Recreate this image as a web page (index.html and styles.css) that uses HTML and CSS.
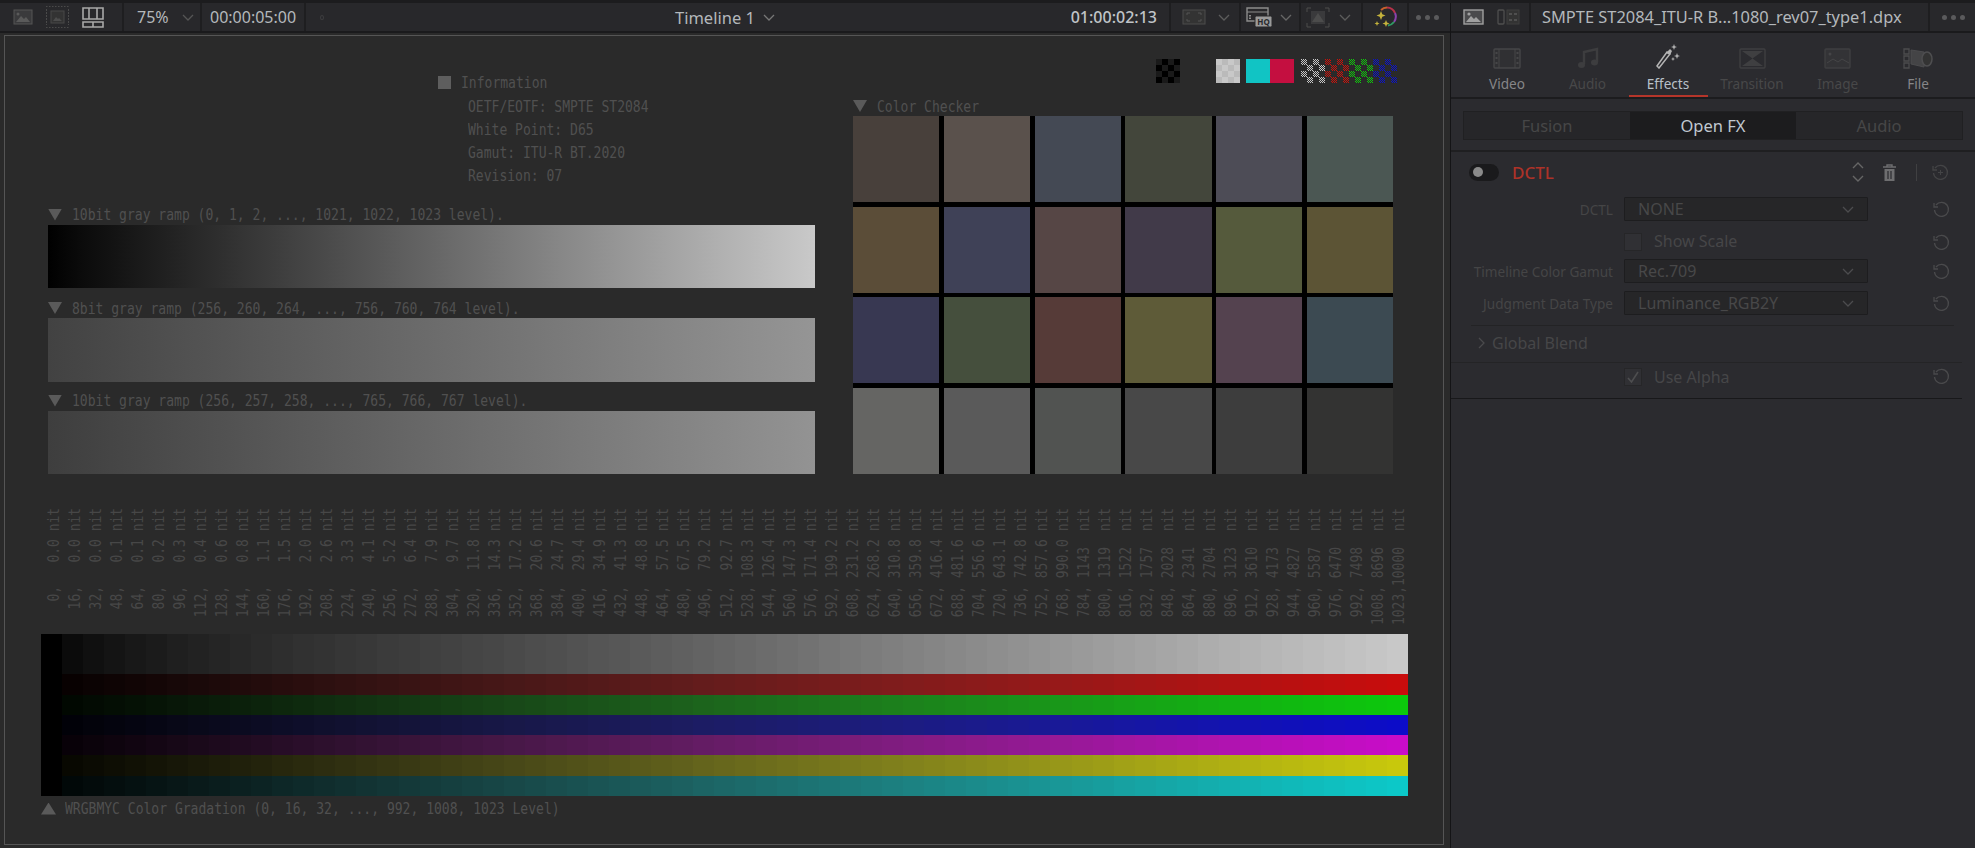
FILE: index.html
```html
<!DOCTYPE html>
<html lang="en">
<head>
  <meta charset="UTF-8" />
  <title>Timeline 1</title>
  <link rel="stylesheet" href="styles.css">
</head>
<body>
  <div class="topstrip"></div>
  <div class="layout">
    <div class="left">
      <div class="toolbar">
        <div class="tb-sec sec-views">
          <svg class="ic" width="20" height="16" viewBox="0 0 20 16"><rect x="1" y="1" width="18" height="14" fill="#3a3a3c" stroke="#555"/><path d="M3 13l5-6 3 3 2-2 4 5z" fill="#5a5a5a"/><circle cx="5" cy="5" r="1.5" fill="#5a5a5a"/></svg>
          <svg class="ic" width="25" height="24" viewBox="0 0 25 24"><path d="M1 1.5h23M1 22.5h23" stroke="#4a4a4a" stroke-dasharray="1.5 1.5"/><path d="M1.5 4v16M23.5 4v16" stroke="#4a4a4a" stroke-dasharray="2 1"/><rect x="6" y="6" width="13" height="12" fill="#333" stroke="#484848"/><path d="M8 16l3-4 2 2 1-1 3 3z" fill="#4c4c4c"/></svg>
          <svg class="ic" width="22" height="21" viewBox="0 0 22 21"><path d="M1 1h20v11H1zM7 1v11M15 1v11M1 15h20v5H1zM11 15v5" fill="none" stroke="#a8a8a8" stroke-width="1.6"/></svg>
        </div>
        <div class="tb-sec sec-zoom"><span class="tb-text">75%</span><svg class="chev" width="12" height="7" viewBox="0 0 12 7"><path d="M1 1l5 5 5-5" fill="none" stroke="#555" stroke-width="1.3"/></svg></div>
        <div class="tb-sec sec-dur"><span class="tb-text">00:00:05:00</span></div>
        <div class="tb-fill">
          <span class="tb-dot"></span>
          <span class="tb-title">Timeline 1</span>
          <svg class="chev" width="12" height="7" viewBox="0 0 12 7"><path d="M1 1l5 5 5-5" fill="none" stroke="#777" stroke-width="1.3"/></svg>
          <span class="tb-tc">01:00:02:13</span>
        </div>
        <div class="tb-sec sec-a">
          <svg width="24" height="16" viewBox="0 0 24 16"><rect x="1" y="1" width="22" height="14" fill="#333" stroke="#4c4c4c"/><path d="M5 6V4h3M16 4h3v2M19 10v2h-3M8 12H5v-2" fill="none" stroke="#555"/></svg>
          <svg class="chev" width="12" height="7" viewBox="0 0 12 7"><path d="M1 1l5 5 5-5" fill="none" stroke="#5c5c5c" stroke-width="1.3"/></svg>
        </div>
        <div class="tb-sec sec-b">
          <svg width="26" height="20" viewBox="0 0 26 20"><path d="M1 1h21v13H1z" fill="none" stroke="#8c8c8c" stroke-width="1.4"/><path d="M1 5h21" stroke="#8c8c8c"/><path d="M4 8v4" stroke="#8c8c8c" stroke-width="2" stroke-dasharray="1.5 1"/><rect x="9" y="9" width="17" height="11" rx="1.5" fill="#9a9a9a" stroke="#28282b"/><text x="17.5" y="18" class="hq">HQ</text></svg>
          <svg class="chev" width="12" height="7" viewBox="0 0 12 7"><path d="M1 1l5 5 5-5" fill="none" stroke="#666" stroke-width="1.3"/></svg>
        </div>
        <div class="tb-sec sec-c">
          <svg width="24" height="21" viewBox="0 0 24 21"><path d="M1 5V1h4M19 1h4v4M23 16v4h-4M5 20H1v-4" fill="none" stroke="#4c4c4c"/><rect x="5" y="4" width="14" height="13" fill="#3a3a3c"/><path d="M6 15l6-9 6 9z" fill="#4c4c4c"/></svg>
          <svg class="chev" width="12" height="7" viewBox="0 0 12 7"><path d="M1 1l5 5 5-5" fill="none" stroke="#5c5c5c" stroke-width="1.3"/></svg>
        </div>
        <div class="tb-sec sec-d">
          <svg width="24" height="22" viewBox="0 0 24 22">
            <path d="M7 4A9 9 0 0 1 13 1.500" fill="none" stroke="#c8602c" stroke-width="2"/>
            <path d="M13 1.500A9 9 0 0 1 21 7" fill="none" stroke="#b8324a" stroke-width="2"/>
            <path d="M21 7A9 9 0 0 1 20 16" fill="none" stroke="#8a42ac" stroke-width="2"/>
            <path d="M20 16A9 9 0 0 1 14 19.500" fill="none" stroke="#2f9a64" stroke-width="2"/>
            <path d="M7 5l1.300 3.200 3.200 1.300-3.200 1.300L7 14l-1.300-3.200-3.200-1.300 3.200-1.300zM12 14l1 2.500 2.500 1-2.500 1-1 2.500-1-2.500-2.500-1 2.500-1zM3 15l.7 1.800 1.800.7-1.800.7L3 20l-.7-1.800-1.800-.7 1.800-.7z" fill="#c4b23c"/>
          </svg>
        </div>
        <div class="tb-sec sec-e"><span class="dots"><i></i><i></i><i></i></span></div>
      </div>
      <div class="stage">
        <div class="viewer">
          <div class="upper">
            <div class="col-ramps">
              <div class="info">
                <div class="line head"><span class="square"></span><span class="mono">Information</span></div>
                <div class="line sub"><span class="mono">OETF/EOTF: SMPTE ST2084</span></div>
                <div class="line sub"><span class="mono">White Point: D65</span></div>
                <div class="line sub"><span class="mono">Gamut: ITU-R BT.2020</span></div>
                <div class="line sub"><span class="mono">Revision: 07</span></div>
              </div>
              <div class="caption first"><span class="tri"></span><span class="mono">10bit gray ramp (0, 1, 2, ..., 1021, 1022, 1023 level).</span></div>
              <div class="ramp ramp-a"></div>
              <div class="caption second"><span class="tri"></span><span class="mono">8bit gray ramp (256, 260, 264, ..., 756, 760, 764 level).</span></div>
              <div class="ramp ramp-b"></div>
              <div class="caption"><span class="tri"></span><span class="mono">10bit gray ramp (256, 257, 258, ..., 765, 766, 767 level).</span></div>
              <div class="ramp ramp-c"></div>
            </div>
            <div class="col-checker">
              <div class="patches">
                <div class="patch chk-dark"></div>
                <div class="patch chk-light"></div>
                <div class="patch cyan"></div>
                <div class="patch crimson"></div>
                <div class="patch fine f-white"></div>
                <div class="patch fine f-red"></div>
                <div class="patch fine f-green"></div>
                <div class="patch fine f-blue"></div>
              </div>
              <div class="caption checker-cap"><span class="tri"></span><span class="mono">Color Checker</span></div>
              <div class="checker">
                <div style="background:#48403b"></div><div style="background:#5a514c"></div><div style="background:#444954"></div><div style="background:#43463b"></div><div style="background:#4d4c56"></div><div style="background:#4b5753"></div>
                <div style="background:#5b4d38"></div><div style="background:#3f4157"></div><div style="background:#564645"></div><div style="background:#413a49"></div><div style="background:#555a3c"></div><div style="background:#5c5435"></div>
                <div style="background:#383852"></div><div style="background:#454f3d"></div><div style="background:#563b38"></div><div style="background:#5e5b38"></div><div style="background:#54424f"></div><div style="background:#3c4a52"></div>
                <div style="background:#656563"></div><div style="background:#5a5a5a"></div><div style="background:#515351"></div><div style="background:#484848"></div><div style="background:#3d3d3d"></div><div style="background:#333332"></div>
              </div>
            </div>
          </div>
          <div class="nits" id="nits"></div>
          <div class="bars" id="bars"></div>
          <div class="caption bottom-cap"><span class="tri up"></span><span class="mono">WRGBMYC Color Gradation (0, 16, 32, ..., 992, 1008, 1023 Level)</span></div>
        </div>
      </div>
    </div>

    <div class="inspector">
      <div class="in-head">
        <div class="in-views">
          <svg width="21" height="16" viewBox="0 0 21 16"><rect x="1" y="1" width="19" height="14" fill="#4a4a4c" stroke="#a0a0a0" stroke-width="1.4"/><path d="M3 13l5-6 3 3 2-2 5 5z" fill="#a0a0a0"/><circle cx="6" cy="5" r="1.6" fill="#a0a0a0"/></svg>
          <svg width="23" height="16" viewBox="0 0 23 16"><rect x="1" y="1" width="6" height="14" rx="1" fill="none" stroke="#4f4f4f" stroke-width="1.3"/><rect x="10" y="1" width="12" height="14" fill="#333" stroke="#3f3f3f"/><path d="M12 5h3M17 5h3M12 11h3M17 11h3" stroke="#4f4f4f" stroke-width="2"/></svg>
        </div>
        <div class="in-title">SMPTE ST2084_ITU-R B...1080_rev07_type1.dpx</div>
        <div class="in-more"><span class="dots"><i></i><i></i><i></i></span></div>
      </div>

      <div class="tabs">
        <div class="tab on-soft">
          <svg width="28" height="21" viewBox="0 0 28 21"><rect x="1" y="1" width="26" height="19" rx="1" fill="#303033" stroke="#464648" stroke-width="1.400"/><path d="M6 1v19M22 1v19" stroke="#464648"/><path d="M3.500 4v14M24.500 4v14" stroke="#464648" stroke-width="2" stroke-dasharray="2 3"/></svg>
          <span>Video</span>
        </div>
        <div class="tab off">
          <svg width="22" height="22" viewBox="0 0 22 22"><path d="M7 17V5l13-3v13" fill="none" stroke="#3d3d3f" stroke-width="2.400"/><ellipse cx="4.500" cy="18" rx="3.500" ry="3" fill="#3d3d3f"/><ellipse cx="17.500" cy="15.500" rx="3.500" ry="3" fill="#3d3d3f"/></svg>
          <span>Audio</span>
        </div>
        <div class="tab active">
          <svg width="26" height="25" viewBox="0 0 26 25"><path d="M2 22l2 2 11-14-3-2z" fill="none" stroke="#b4b4b4" stroke-width="1.500"/><path d="M11 9l4-4 2 2-2 4z" fill="#b4b4b4"/><path d="M19 0l.8 2.200L22 3l-2.200.8L19 6l-.8-2.200L16 3l2.200-.8zM22 9l.8 2.200L25 12l-2.200.8L22 15l-.8-2.200L19 12l2.200-.8zM18 13l.6 1.400 1.400.6-1.400.6-.6 1.400-.6-1.400-1.400-.6 1.400-.6z" fill="#b4b4b4"/></svg>
          <span>Effects</span>
        </div>
        <div class="tab off">
          <svg width="27" height="21" viewBox="0 0 27 21"><rect x="1" y="1" width="25" height="19" rx="1" fill="none" stroke="#3f3f41" stroke-width="1.400"/><path d="M3 3h21l-10.500 7.500zM3 18h21l-10.500-7.500z" fill="#3f3f41"/></svg>
          <span>Transition</span>
        </div>
        <div class="tab off">
          <svg width="27" height="21" viewBox="0 0 27 21"><rect x="1" y="1" width="25" height="19" rx="1" fill="#333336" stroke="#3f3f41" stroke-width="1.400"/><path d="M3 15l6-4 5 3 4-3 7 4" fill="none" stroke="#454547"/><circle cx="6" cy="6" r="1.500" fill="#454547"/></svg>
          <span>Image</span>
        </div>
        <div class="tab on-soft">
          <svg width="30" height="21" viewBox="0 0 30 21"><path d="M1 1h5v5H1zM1 8h5v5H1zM1 15h5v5H1z" fill="none" stroke="#4c4c4e" stroke-width="1.300"/><path d="M8 2l13 2v15l-13-3z" fill="#444446" stroke="#4c4c4e"/><ellipse cx="24" cy="11" rx="5" ry="7" fill="#333" stroke="#4e4e50" stroke-width="1.500"/></svg>
          <span>File</span>
        </div>
      </div>

      <div class="subtabs-wrap">
        <div class="subtabs">
          <div class="subtab">Fusion</div>
          <div class="subtab sel">Open FX</div>
          <div class="subtab">Audio</div>
        </div>
      </div>

      <div class="fx-head">
        <span class="switch"><i></i></span>
        <span class="fx-name">DCTL</span>
        <svg class="fx-updown" width="12" height="20" viewBox="0 0 12 20"><path d="M1 6l5-5 5 5M1 14l5 5 5-5" fill="none" stroke="#666" stroke-width="1.400"/></svg>
        <svg class="fx-trash" width="13" height="17" viewBox="0 0 13 17"><path d="M0 3h13M4 3V1h5v2" fill="none" stroke="#6e6e70" stroke-width="1.400"/><path d="M1.500 5h10v12h-10z" fill="#6e6e70"/><path d="M5 7v8M8 7v8" stroke="#2b2b2f" stroke-width="1.200"/></svg>
        <span class="fx-sep"></span>
        <svg class="reset" width="17" height="17" viewBox="0 0 17 17"><path d="M3 4a7 7 0 1 1-1.500 5" fill="none" stroke="#444446" stroke-width="1.300"/><path d="M1 2v4h4" fill="none" stroke="#444446" stroke-width="1.300"/><path d="M8.500 6v5M6 8.500h5" stroke="#444446"/></svg>
      </div>

      <div class="row row-dctl">
        <label class="row-label">DCTL</label>
        <div class="select"><span>NONE</span><svg width="12" height="7" viewBox="0 0 12 7"><path d="M1 1l5 5 5-5" fill="none" stroke="#4c4c4e" stroke-width="1.300"/></svg></div>
        <svg class="reset" width="17" height="17" viewBox="0 0 17 17"><path d="M3 4a7 7 0 1 1-1.500 5" fill="none" stroke="#4a4a4c" stroke-width="1.300"/><path d="M1 2v4h4" fill="none" stroke="#4a4a4c" stroke-width="1.300"/></svg>
      </div>
      <div class="row row-check">
        <span></span>
        <div class="check-line"><span class="check"></span><span class="check-text">Show Scale</span></div>
        <svg class="reset" width="17" height="17" viewBox="0 0 17 17"><path d="M3 4a7 7 0 1 1-1.500 5" fill="none" stroke="#4a4a4c" stroke-width="1.300"/><path d="M1 2v4h4" fill="none" stroke="#4a4a4c" stroke-width="1.300"/></svg>
      </div>
      <div class="row row-gamut">
        <label class="row-label">Timeline Color Gamut</label>
        <div class="select"><span>Rec.709</span><svg width="12" height="7" viewBox="0 0 12 7"><path d="M1 1l5 5 5-5" fill="none" stroke="#4c4c4e" stroke-width="1.300"/></svg></div>
        <svg class="reset" width="17" height="17" viewBox="0 0 17 17"><path d="M3 4a7 7 0 1 1-1.500 5" fill="none" stroke="#4a4a4c" stroke-width="1.300"/><path d="M1 2v4h4" fill="none" stroke="#4a4a4c" stroke-width="1.300"/></svg>
      </div>
      <div class="row row-judge">
        <label class="row-label">Judgment Data Type</label>
        <div class="select"><span>Luminance_RGB2Y</span><svg width="12" height="7" viewBox="0 0 12 7"><path d="M1 1l5 5 5-5" fill="none" stroke="#4c4c4e" stroke-width="1.300"/></svg></div>
        <svg class="reset" width="17" height="17" viewBox="0 0 17 17"><path d="M3 4a7 7 0 1 1-1.500 5" fill="none" stroke="#4a4a4c" stroke-width="1.300"/><path d="M1 2v4h4" fill="none" stroke="#4a4a4c" stroke-width="1.300"/></svg>
      </div>

      <div class="blend">
        <svg width="8" height="12" viewBox="0 0 8 12"><path d="M1 1l5 5-5 5" fill="none" stroke="#4a4a4c" stroke-width="1.300"/></svg>
        <span>Global Blend</span>
      </div>

      <div class="row row-alpha">
        <span></span>
        <div class="check-line"><span class="check"><svg width="18" height="18" viewBox="0 0 18 18"><path d="M4 10l3.500 4L14 4" fill="none" stroke="#4e4e50" stroke-width="1.600"/></svg></span><span class="check-text">Use Alpha</span></div>
        <svg class="reset" width="17" height="17" viewBox="0 0 17 17"><path d="M3 4a7 7 0 1 1-1.500 5" fill="none" stroke="#4a4a4c" stroke-width="1.300"/><path d="M1 2v4h4" fill="none" stroke="#4a4a4c" stroke-width="1.300"/></svg>
      </div>
    </div>
  </div>
  <script src="script.js"></script>
</body>
</html>
```

FILE: styles.css
```css
* {
  box-sizing: border-box;
}
html, body {
  margin: 0;
  height: 848px;
  overflow: hidden;
}
body {
  background: #1a1a1c;
  font-family: "Noto Sans", sans-serif;
  color: #888;
}
.topstrip {
  height: 3px;
  background: #1c1c1e;
}
.layout {
  display: flex;
  height: 845px;
}
.left {
  width: 1450px;
  flex: none;
}

/* toolbar */
.toolbar {
  display: flex;
  height: 30px;
  background: #28282b;
  border-bottom: 2px solid #1a1a1c;
}
.tb-sec {
  display: flex;
  align-items: center;
  border-right: 2px solid #1e1e20;
  flex: none;
}
.sec-views { width: 124px; padding-left: 13px; gap: 12px; }
.sec-zoom { width: 78px; padding-left: 13px; gap: 13px; }
.sec-dur { width: 104px; padding-left: 8px; }
.sec-a { width: 70px; padding-left: 11px; gap: 12px; }
.sec-b { width: 60px; padding-left: 5px; gap: 8px; }
.sec-c { width: 62px; padding-left: 5px; gap: 9px; }
.sec-d { width: 46px; padding-left: 11px; }
.sec-e { width: 41px; padding-left: 7px; border-right: 0; }
.tb-text {
  font-size: 16px;
  color: #b4b8bc;
}
.tb-fill {
  flex: 1;
  display: flex;
  align-items: center;
  border-right: 2px solid #1e1e20;
}
.tb-dot {
  width: 4px;
  height: 5px;
  margin-left: 14px;
  border-radius: 50%;
  border: 1px solid #3e3e40;
}
.tb-title {
  margin-left: 351px;
  font-size: 16.500px;
  color: #b4b8bc;
}
.tb-fill .chev {
  margin-left: 8px;
}
.tb-tc {
  margin-left: auto;
  padding-right: 12px;
  font-size: 16px;
  font-weight: 500;
  color: #c0c4c8;
}
.hq {
  font: bold 8px "Noto Sans", sans-serif;
  fill: #28282b;
  text-anchor: middle;
}
.dots {
  display: flex;
  gap: 4px;
}
.dots i {
  width: 5px;
  height: 5px;
  border-radius: 50%;
  background: #5a5a5c;
}

/* viewer */
.stage {
  height: 815px;
  padding: 2px 6px 1px 4px;
  background: #2a2a2a;
}
.viewer {
  height: 810px;
  padding-left: 36px;
  border: 1px solid #555;
  background: #2a2a2a;
}
.upper {
  display: flex;
  gap: 38px;
  padding-left: 7px;
}
.col-ramps {
  width: 767px;
  flex: none;
}
.col-checker {
  width: 540px;
  flex: none;
}
.mono {
  display: block;
  font-family: "DejaVu Sans Mono", monospace;
  font-size: 16px;
  white-space: pre;
  color: #505050;
  transform: scaleX(.815);
  transform-origin: left center;
}
.info {
  margin-left: 390px;
  padding-top: 36px;
}
.line {
  display: flex;
  align-items: center;
  height: 23px;
}
.line.head {
  margin-top: -1px;
  margin-bottom: 1px;
}
.sub {
  padding-left: 30px;
}
.square {
  width: 13px;
  height: 13px;
  margin-right: 10px;
  background: #5e5e5e;
}
.caption {
  display: flex;
  align-items: center;
  height: 20px;
  margin-top: 9px;
}
.caption.first {
  margin-top: 17.500px;
}
.caption.second {
  margin-top: 10px;
}
.tri {
  width: 14px;
  height: 12px;
  margin-right: 10px;
  background: #5a5a5a;
  clip-path: polygon(0 0, 100% 0, 50% 100%);
}
.tri.up {
  width: 15px;
  margin-right: 9px;
  clip-path: polygon(50% 0, 100% 100%, 0 100%);
}
.ramp {
  height: 63.500px;
}
.ramp-a { background: linear-gradient(90deg, #000, #0a0a0a 4%, #c9c9c9); }
.ramp-b { background: linear-gradient(90deg, #424242, #959595); }
.ramp-c { background: linear-gradient(90deg, #3e3e3e, #939393); }

.patches {
  display: flex;
  height: 24px;
  margin-top: 23px;
  padding-left: 303px;
}
.patch {
  width: 24px;
  flex: none;
}
.chk-dark {
  background: repeating-conic-gradient(#000 0 25%, #1a1a1a 0 50%) 0 0 / 12px 12px;
}
.chk-light {
  margin-left: 36px;
  background: repeating-conic-gradient(#bababa 0 25%, #c8c8c8 0 50%) 0 0 / 12px 12px;
}
.cyan {
  margin-left: 5.500px;
  background: #11c4c4;
}
.crimson {
  background: #c40f40;
}
.fine {
  position: relative;
  background: repeating-conic-gradient(var(--dot) 0 25%, transparent 0 50%) 6px 0 / 12px 12px;
}
.fine::after {
  content: "";
  position: absolute;
  inset: 0;
  background: repeating-conic-gradient(#2a2a2a 0 25%, transparent 0 50%) 0 0 / 2px 2px;
}
.f-white { --dot: #c8c8c8; margin-left: 7px; }
.f-red { --dot: #c8140c; }
.f-green { --dot: #10c80c; }
.f-blue { --dot: #0c14c8; }
.checker-cap {
  margin-top: 13px;
}
.checker {
  display: grid;
  grid-template-columns: repeat(6, 86.250px);
  grid-template-rows: repeat(4, 86px);
  gap: 4.500px;
  height: 358px;
  background: #000;
}

.nits {
  display: flex;
  height: 117px;
  margin-top: 33.500px;
  margin-left: 2px;
}
.nit {
  width: 21.020px;
  height: 117px;
  flex: none;
  display: flex;
  justify-content: center;
}
.nit span {
  flex: none;
  height: 144.500px;
  writing-mode: vertical-rl;
  white-space: pre;
  font-family: "DejaVu Sans Mono", monospace;
  font-size: 16px;
  line-height: 21px;
  color: #474747;
  transform-origin: center top;
  transform: translateY(117px) rotate(180deg) scaleY(.81);
}
.bars {
  width: 1367px;
  margin-top: 9px;
}
.bar-row {
  display: grid;
  grid-template-columns: repeat(65, 1fr);
  height: 20px;
}
.bar-row.tall { height: 40px; }
.bar-row.thick { height: 21px; }
.bottom-cap {
  margin-top: 3px;
}

/* inspector */
.inspector {
  flex: 1;
  height: 845px;
  background: #2b2b2f;
  border-left: 1px solid #141416;
  font-size: 13px;
}
.in-head {
  display: flex;
  align-items: center;
  height: 30px;
  background: #28282b;
  border-bottom: 2px solid #1a1a1c;
}
.in-views {
  display: flex;
  align-items: center;
  gap: 13px;
  width: 80px;
  height: 100%;
  padding-left: 12px;
  border-right: 2px solid #1e1e20;
}
.in-title {
  width: 399px;
  height: 100%;
  padding-left: 11px;
  line-height: 27px;
  font-size: 16.400px;
  white-space: nowrap;
  color: #b4b8bc;
  border-right: 2px solid #1e1e20;
}
.in-more {
  padding-left: 12px;
}
.tabs {
  display: grid;
  grid-template-columns: 79px 82px 79px 89px 82.500px 78px;
  height: 66px;
  padding-left: 16.500px;
  border-bottom: 2px solid #1c1c1e;
}
.tab {
  position: relative;
  display: flex;
  flex-direction: column;
  align-items: center;
  justify-content: flex-end;
  padding-bottom: 4px;
  gap: 5px;
  white-space: nowrap;
  font-size: 13.600px;
}
.tab svg { flex: none; }
.tab.on-soft { color: #868688; }
.tab.off { color: #484849; }
.tab.active { color: #b8c0c8; }
.tab.active::after {
  content: "";
  position: absolute;
  left: 0;
  right: 0;
  bottom: 0;
  height: 2px;
  background: #b5352a;
}
.subtabs-wrap {
  height: 53px;
  padding: 12px 12px 0;
  border-bottom: 2px solid #1f1f21;
}
.subtabs {
  display: grid;
  grid-template-columns: repeat(3, 1fr);
  height: 29px;
  background: #262629;
  border: 1px solid #202022;
}
.subtab {
  text-align: center;
  line-height: 27px;
  font-size: 16.500px;
  color: #464647;
}
.subtab.sel {
  background: #1c1c1e;
  color: #c0c8d0;
}
.fx-head {
  display: flex;
  align-items: center;
  height: 40px;
  padding-left: 18px;
}
.switch {
  display: flex;
  align-items: center;
  width: 30px;
  height: 17px;
  padding-left: 4px;
  border-radius: 9px;
  background: #1a1a1c;
}
.switch i {
  width: 10px;
  height: 10px;
  border-radius: 50%;
  background: #8a8a8a;
}
.fx-name {
  margin-left: 13px;
  width: 43px;
  font-size: 17px;
  font-weight: 500;
  color: #ad3228;
}
.fx-updown { margin-left: 297px; }
.fx-trash { margin-left: 19px; }
.fx-sep {
  width: 1px;
  height: 17px;
  margin-left: 20px;
  background: #404042;
}
.fx-head .reset { margin-left: 15px; }
.row {
  display: grid;
  grid-template-columns: 162px 244px 17px;
  align-items: center;
  column-gap: 11px;
}
.row .reset {
  margin-left: 54px;
}
.row-dctl { margin-top: 5px; height: 24px; }
.row-check { margin-top: 11px; height: 18px; }
.row-gamut { margin-top: 9px; height: 24px; }
.row-judge { margin-top: 8px; height: 24px; }
.row-label {
  text-align: right;
  font-size: 13.600px;
  white-space: nowrap;
  color: #454546;
}
.select {
  display: flex;
  align-items: center;
  justify-content: space-between;
  height: 24px;
  padding: 0 13px 0 13px;
  background: #262628;
  border: 1px solid #1d1d1f;
  border-radius: 1px;
  font-size: 16px;
  color: #484849;
}
.check-line {
  display: flex;
  align-items: center;
  gap: 12px;
}
.check {
  width: 18px;
  height: 18px;
  background: #303034;
  border: 1px solid #262628;
}
.check svg {
  display: block;
  margin: -1px;
}
.check-text {
  margin-top: -2px;
  font-size: 16px;
  color: #464648;
}
.row-alpha .check-text {
  margin-top: 0;
}
.blend {
  display: flex;
  align-items: center;
  gap: 6px;
  height: 37px;
  margin: 10px 21px 0 20px;
  padding: 0 0 3px 7px;
  border-top: 1px solid #232325;
  font-size: 16px;
  color: #464648;
}
.row-alpha {
  height: 37px;
  margin-right: 13px;
  padding-bottom: 8px;
  border-top: 1px solid #242426;
  border-bottom: 1px solid #18181a;
}
```

FILE: script.js
```js
// level / nit pairs for the scale above the colour bars
const niveis = [
  [0,'0.0'],[16,'0.0'],[32,'0.0'],[48,'0.1'],[64,'0.1'],[80,'0.2'],[96,'0.3'],[112,'0.4'],
  [128,'0.6'],[144,'0.8'],[160,'1.1'],[176,'1.5'],[192,'2.0'],[208,'2.6'],[224,'3.3'],[240,'4.1'],
  [256,'5.2'],[272,'6.4'],[288,'7.9'],[304,'9.7'],[320,'11.8'],[336,'14.3'],[352,'17.2'],[368,'20.6'],
  [384,'24.7'],[400,'29.4'],[416,'34.9'],[432,'41.3'],[448,'48.8'],[464,'57.5'],[480,'67.5'],[496,'79.2'],
  [512,'92.7'],[528,'108.3'],[544,'126.4'],[560,'147.3'],[576,'171.4'],[592,'199.2'],[608,'231.2'],[624,'268.2'],
  [640,'310.8'],[656,'359.8'],[672,'416.4'],[688,'481.6'],[704,'556.6'],[720,'643.1'],[736,'742.8'],[752,'857.6'],
  [768,'990.0'],[784,'1143'],[800,'1319'],[816,'1522'],[832,'1757'],[848,'2028'],[864,'2341'],[880,'2704'],
  [896,'3123'],[912,'3610'],[928,'4173'],[944,'4827'],[960,'5587'],[976,'6470'],[992,'7498'],[1008,'8696'],[1023,'10000']
];

const nits = document.getElementById('nits');
niveis.forEach(([nivel, valor]) => {
  const num = valor.includes('.') ? valor.padStart(6) + ' ' : valor.padStart(5) + '  ';
  const div = document.createElement('div');
  div.className = 'nit';
  const span = document.createElement('span');
  span.textContent = String(nivel).padStart(4) + ',' + num + 'nit';
  div.appendChild(span);
  nits.appendChild(div);
});

// gray row: the first steps are lifted, so read it off these index / value stops
const paradas = [[0, 0], [1, 11], [3, 20], [7, 34], [11, 46], [19, 66], [28, 90], [64, 200]];
function cinza(i) {
  for (let p = 1; p < paradas.length; p++) {
    const [i0, v0] = paradas[p - 1];
    const [i1, v1] = paradas[p];
    if (i <= i1) return Math.round(v0 + (v1 - v0) * (i - i0) / (i1 - i0));
  }
  return 200;
}

// which channels carry the signal in each row, plus row class
const linhas = [
  { canais: [1, 1, 1], classe: 'tall' },
  { canais: [1, 0, 0], classe: 'thick' },
  { canais: [0, 1, 0], classe: '' },
  { canais: [0, 0, 1], classe: '' },
  { canais: [1, 0, 1], classe: '' },
  { canais: [1, 1, 0], classe: 'thick' },
  { canais: [0, 1, 1], classe: '' }
];

const bars = document.getElementById('bars');
linhas.forEach(({ canais, classe }, l) => {
  const row = document.createElement('div');
  row.className = 'bar-row ' + classe;
  niveis.forEach(([nivel], i) => {
    const t = nivel / 1023;
    const alto = l === 0 ? cinza(i) : i === 0 ? 0 : Math.round(5 + 195 * t);
    // the unused channels lift a little in the midtones
    const baixo = Math.round(12 * t + 22 * Math.sin(Math.PI * t));
    const rgb = canais.map(c => (c ? alto : baixo)).join(',');
    const cell = document.createElement('div');
    cell.style.background = `rgb(${rgb})`;
    row.appendChild(cell);
  });
  bars.appendChild(row);
});
```
